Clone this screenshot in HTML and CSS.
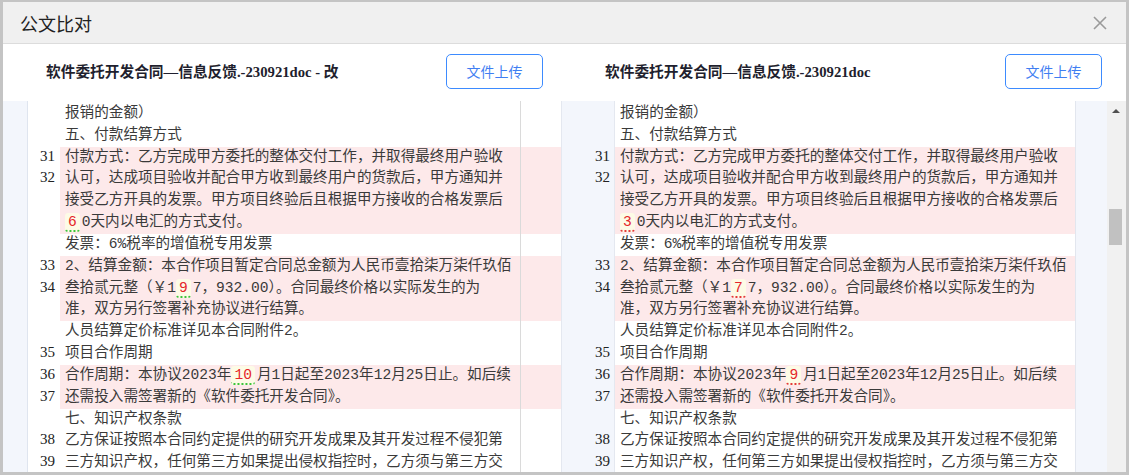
FILE: index.html
```html
<!DOCTYPE html>
<html lang="zh-CN">
<head>
<meta charset="utf-8">
<title>公文比对</title>
<link rel="stylesheet" href="styles.css">
</head>
<body>
<div class="window">
  <div class="header">
    <span class="header-title">公文比对</span>
    <svg class="close" width="14" height="14" viewBox="0 0 14 14"><path d="M1 1 L13 13 M13 1 L1 13" stroke="#9a9a9a" stroke-width="1.6" fill="none"/></svg>
  </div>
  <div class="toolbar">
    <div class="side side-left">
      <span class="doc-name">软件委托开发合同—信息反馈.-230921doc - 改</span>
      <button class="upload">文件上传</button>
    </div>
    <div class="side side-right">
      <span class="doc-name">软件委托开发合同—信息反馈.-230921doc</span>
      <button class="upload">文件上传</button>
    </div>
  </div>
  <div class="compare">
    <div class="rows">
      <div class="row spacer"><div class="l-strip"></div><div class="l-num"></div><div class="l-text"></div><div class="gap"></div><div class="r-num"></div><div class="r-text"></div><div class="r-strip"></div></div>

      <div class="row"><div class="l-strip"></div><div class="l-num"></div><div class="l-text">报销的金额）</div><div class="gap"></div><div class="r-num"></div><div class="r-text">报销的金额）</div><div class="r-strip"></div></div>
      <div class="row"><div class="l-strip"></div><div class="l-num"></div><div class="l-text">五、付款结算方式</div><div class="gap"></div><div class="r-num"></div><div class="r-text">五、付款结算方式</div><div class="r-strip"></div></div>

      <div class="row diff"><div class="l-strip"></div><div class="l-num">31</div><div class="l-text">付款方式：乙方完成甲方委托的整体交付工作，并取得最终用户验收</div><div class="gap"></div><div class="r-num">31</div><div class="r-text">付款方式：乙方完成甲方委托的整体交付工作，并取得最终用户验收</div><div class="r-strip"></div></div>
      <div class="row diff"><div class="l-strip"></div><div class="l-num">32</div><div class="l-text">认可，达成项目验收并配合甲方收到最终用户的货款后，甲方通知并</div><div class="gap"></div><div class="r-num">32</div><div class="r-text">认可，达成项目验收并配合甲方收到最终用户的货款后，甲方通知并</div><div class="r-strip"></div></div>
      <div class="row diff"><div class="l-strip"></div><div class="l-num"></div><div class="l-text">接受乙方开具的发票。甲方项目终验后且根据甲方接收的合格发票后</div><div class="gap"></div><div class="r-num"></div><div class="r-text">接受乙方开具的发票。甲方项目终验后且根据甲方接收的合格发票后</div><div class="r-strip"></div></div>
      <div class="row diff"><div class="l-strip"></div><div class="l-num"></div><div class="l-text"><span class="mark mark-new">6</span>0天内以电汇的方式支付。</div><div class="gap"></div><div class="r-num"></div><div class="r-text"><span class="mark mark-old">3</span>0天内以电汇的方式支付。</div><div class="r-strip"></div></div>

      <div class="row"><div class="l-strip"></div><div class="l-num"></div><div class="l-text">发票：6%税率的增值税专用发票</div><div class="gap"></div><div class="r-num"></div><div class="r-text">发票：6%税率的增值税专用发票</div><div class="r-strip"></div></div>

      <div class="row diff"><div class="l-strip"></div><div class="l-num">33</div><div class="l-text">2、结算金额：本合作项目暂定合同总金额为人民币壹拾柒万柒仟玖佰</div><div class="gap"></div><div class="r-num">33</div><div class="r-text">2、结算金额：本合作项目暂定合同总金额为人民币壹拾柒万柒仟玖佰</div><div class="r-strip"></div></div>
      <div class="row diff"><div class="l-strip"></div><div class="l-num">34</div><div class="l-text">叁拾贰元整（￥1<span class="mark mark-new">9</span>7，932.00）。合同最终价格以实际发生的为</div><div class="gap"></div><div class="r-num">34</div><div class="r-text">叁拾贰元整（￥1<span class="mark mark-old">7</span>7，932.00）。合同最终价格以实际发生的为</div><div class="r-strip"></div></div>
      <div class="row diff"><div class="l-strip"></div><div class="l-num"></div><div class="l-text">准，双方另行签署补充协议进行结算。</div><div class="gap"></div><div class="r-num"></div><div class="r-text">准，双方另行签署补充协议进行结算。</div><div class="r-strip"></div></div>

      <div class="row"><div class="l-strip"></div><div class="l-num"></div><div class="l-text">人员结算定价标准详见本合同附件2。</div><div class="gap"></div><div class="r-num"></div><div class="r-text">人员结算定价标准详见本合同附件2。</div><div class="r-strip"></div></div>
      <div class="row"><div class="l-strip"></div><div class="l-num">35</div><div class="l-text">项目合作周期</div><div class="gap"></div><div class="r-num">35</div><div class="r-text">项目合作周期</div><div class="r-strip"></div></div>

      <div class="row diff"><div class="l-strip"></div><div class="l-num">36</div><div class="l-text">合作周期：本协议2023年<span class="mark mark-new">10</span>月1日起至2023年12月25日止。如后续</div><div class="gap"></div><div class="r-num">36</div><div class="r-text">合作周期：本协议2023年<span class="mark mark-old">9</span>月1日起至2023年12月25日止。如后续</div><div class="r-strip"></div></div>
      <div class="row diff"><div class="l-strip"></div><div class="l-num">37</div><div class="l-text">还需投入需签署新的《软件委托开发合同》。</div><div class="gap"></div><div class="r-num">37</div><div class="r-text">还需投入需签署新的《软件委托开发合同》。</div><div class="r-strip"></div></div>

      <div class="row"><div class="l-strip"></div><div class="l-num"></div><div class="l-text">七、知识产权条款</div><div class="gap"></div><div class="r-num"></div><div class="r-text">七、知识产权条款</div><div class="r-strip"></div></div>
      <div class="row"><div class="l-strip"></div><div class="l-num">38</div><div class="l-text">乙方保证按照本合同约定提供的研究开发成果及其开发过程不侵犯第</div><div class="gap"></div><div class="r-num">38</div><div class="r-text">乙方保证按照本合同约定提供的研究开发成果及其开发过程不侵犯第</div><div class="r-strip"></div></div>
      <div class="row"><div class="l-strip"></div><div class="l-num">39</div><div class="l-text">三方知识产权，任何第三方如果提出侵权指控时，乙方须与第三方交</div><div class="gap"></div><div class="r-num">39</div><div class="r-text">三方知识产权，任何第三方如果提出侵权指控时，乙方须与第三方交</div><div class="r-strip"></div></div>
    </div>
    <div class="scrollbar">
      <div class="scroll-up"></div>
      <div class="scroll-thumb"></div>
    </div>
  </div>
</div>
</body>
</html>
```

FILE: styles.css
```css
* { box-sizing: border-box; }

html, body {
  margin: 0;
  padding: 0;
  background: #ffffff;
}

.window {
  width: 1129px;
  height: 475px;
  border: 3px solid #c4c4c4;
  border-top-width: 2px;
  display: flex;
  flex-direction: column;
  overflow: hidden;
  background: #fff;
}

.header {
  height: 42px;
  flex: none;
  background: #f0f0f0;
  border-bottom: 1px solid #dcdcdc;
  display: flex;
  align-items: center;
  justify-content: space-between;
  padding: 0 19px 0 17px;
}

.header-title {
  font-family: "Noto Sans CJK SC", sans-serif;
  font-size: 18px;
  color: #222;
}

.close {
  display: block;
  margin-top: 1px;
}

.toolbar {
  height: 57px;
  flex: none;
  display: flex;
}

.side {
  display: flex;
  align-items: center;
  justify-content: space-between;
}

.side-left {
  width: 558px;
  padding: 0 18px 0 43px;
}

.side-right {
  width: 565px;
  padding: 0 24px 0 44px;
}

.doc-name {
  font-family: "Liberation Serif", "Noto Sans CJK SC", serif;
  font-weight: bold;
  font-size: 14.7px;
  color: #1f1f2e;
  margin-top: -5px;
}

.upload {
  width: 97px;
  height: 35px;
  margin-top: -3px;
  border: 1px solid #3d8bff;
  border-radius: 5px;
  background: #fff;
  color: #3f7ef2;
  font-family: "Noto Sans CJK SC", sans-serif;
  font-size: 14px;
  padding: 0;
}

.compare {
  flex: 1;
  display: flex;
  overflow: hidden;
}

.rows {
  width: 1104px;
  flex: none;
}

.row {
  display: grid;
  grid-template-columns: 25px 32px 461px 40px 54px 461px 31px;
  height: 21.83px;
  font-family: "Liberation Mono", "Noto Sans CJK SC", monospace;
  font-size: 14.6px;
  line-height: 21.83px;
  color: #3a3a3a;
  white-space: nowrap;
}

.row.spacer {
  height: 2px;
}

.l-strip {
  background: #f3f6fc;
  border-right: 1px solid #dfe5ef;
}

.l-num,
.r-num {
  font-family: "Liberation Serif", serif;
  font-size: 15px;
  line-height: 15px;
  padding-top: 2px;
  text-align: right;
  color: #222;
}

.l-num {
  padding-right: 5px;
  background: #fff;
}

.l-text {
  padding-left: 5px;
  border-right: 1px solid #dadada;
  overflow: hidden;
}

.gap {
  background: #fff;
}

.r-num {
  background: #f3f6fc;
  border-left: 1px solid #e4e8f0;
  border-right: 1px solid #e4e8f0;
  padding-right: 4px;
}

.r-text {
  padding-left: 5px;
  border-right: 1px solid #e2e6ee;
  overflow: hidden;
}

.r-strip {
  background: #f3f6fc;
}

.diff .l-text,
.diff .gap,
.diff .r-text {
  background: #fde9ea;
}

.mark {
  display: inline-block;
  height: 19px;
  line-height: 18px;
  padding: 0 3px;
  margin: 1px 2px 0 1px;
  background: #fdfbe6;
  border-radius: 3px;
  color: #e5262a;
  vertical-align: top;
}

.row .mark:first-child {
  margin-left: 0;
}

.mark-new {
  border-bottom: 2px dotted #3cc43c;
}

.mark-old {
  border-bottom: 2px dotted #e53a3a;
}

.scrollbar {
  width: 19px;
  flex: none;
  background: #f1f1f1;
  padding: 0 4px 0 2px;
}

.scroll-up {
  width: 0;
  height: 0;
  margin: 8px auto 0;
  border-left: 4px solid transparent;
  border-right: 4px solid transparent;
  border-bottom: 4px solid #505050;
}

.scroll-thumb {
  margin-top: 96px;
  height: 36px;
  background: #c1c1c1;
}
```
